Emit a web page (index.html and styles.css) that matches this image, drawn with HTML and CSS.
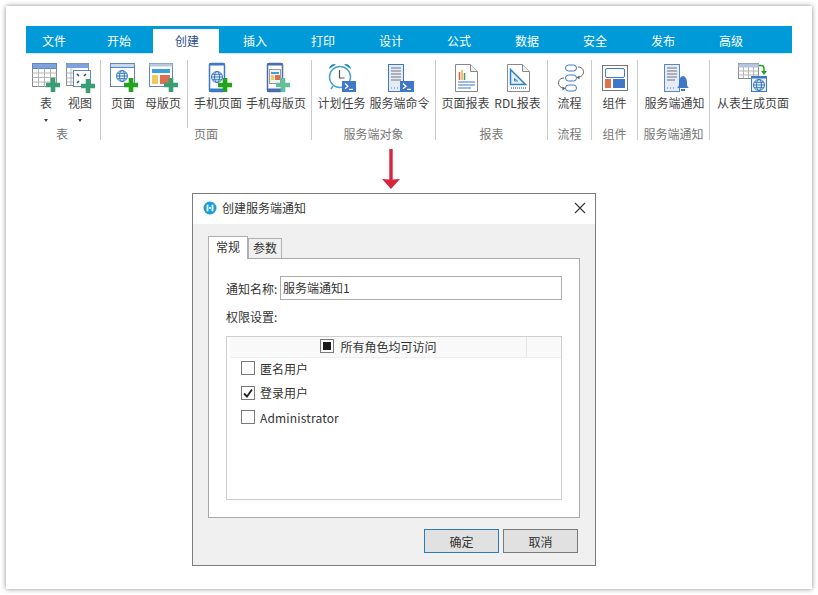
FILE: index.html
```html
<!DOCTYPE html>
<html lang="zh">
<head>
<meta charset="utf-8">
<title>创建服务端通知</title>
<link rel="stylesheet" href="styles.css">
</head>
<body>
<svg class="defs" width="0" height="0">
  <defs>
    <path id="plus" d="M-2.3-7h4.6v4.7H7v4.6H2.3V7h-4.6V2.3H-7v-4.6h4.7z"/>
    <g id="globe" fill="none" stroke="#2f6fb7" stroke-width=".9">
      <circle r="5.500" fill="#dfeefa"/><ellipse rx="2.500" ry="5.500"/><path d="M-5.500 0h11M-4.800-2.700h9.600M-4.800 2.700h9.600"/>
    </g>
    <g id="prompt">
      <rect width="14" height="11" fill="#3f78c9"/>
      <path d="M3 2.600l3 2.600-3 2.600" fill="none" stroke="#fff" stroke-width="1.300"/><path d="M7 8.400h4" stroke="#fff" stroke-width="1.200"/>
    </g>
  </defs>
</svg>
<main class="card">
  <nav class="tabbar">
    <span class="tab t56">文件</span>
    <span class="tab t70">开始</span>
    <span class="tab t66 active">创建</span>
    <span class="tab t68 after">插入</span>
    <span class="tab t68">打印</span>
    <span class="tab t68">设计</span>
    <span class="tab t68">公式</span>
    <span class="tab t68">数据</span>
    <span class="tab t68">安全</span>
    <span class="tab t68">发布</span>
    <span class="tab t68">高级</span>
  </nav>
  <section class="ribbon">
    <div class="group g75">
      <div class="items">
        <div class="item w34">
          <svg class="ico" viewBox="0 0 36 32"><rect x="4.500" y="1.500" width="24" height="23" fill="#fff" stroke="#8a8a8a"/><rect x="4.500" y="1.500" width="24" height="5" fill="#7ea3dc" stroke="#5f86c4"/><path d="M4.500 11h24M4.500 15.500h24M4.500 20h24M10.500 6.500v18M16.500 6.500v18M22.500 6.500v18" stroke="#b5b5b5" fill="none"/><use href="#plus" x="25" y="23" fill="#3a9e74"/></svg>
          <span class="lbl">表</span><i class="caret"></i>
        </div>
        <div class="item w34">
          <svg class="ico" viewBox="0 0 36 32"><rect x="4.500" y="1.500" width="22" height="22" fill="#fff" stroke="#8a8a8a"/><rect x="4.500" y="1.500" width="22" height="4.500" fill="#7ea3dc"/><path d="M4.500 11h7M4.500 16h7M4.500 20h7M9 6v17" stroke="#b5b5b5"/><rect x="11.500" y="8.500" width="17" height="16" fill="#fff" stroke="#5f86c4"/><path d="M15 12l2 2M24 12l-2 2M15 21l2-2" stroke="#34507f" stroke-width="1.600"/><use href="#plus" x="26" y="24" fill="#3a9e74"/></svg>
          <span class="lbl">视图</span><i class="caret"></i>
        </div>
      </div>
      <div class="glabel">表</div>
    </div>
    <div class="group g211">
      <div class="items">
        <div class="sub first">
          <div class="item w40">
            <svg class="ico" viewBox="0 0 36 32"><rect x="5.500" y="1.500" width="24" height="23" fill="#fff" stroke="#5f86c4"/><rect x="5.500" y="1.500" width="24" height="4" fill="#c7d8f0" stroke="#5f86c4"/><use href="#globe" x="17" y="14"/><use href="#plus" x="26" y="23" fill="#21a31c"/></svg>
            <span class="lbl">页面</span>
          </div>
          <div class="item w40">
            <svg class="ico" viewBox="0 0 36 32"><rect x="4.500" y="1.500" width="23" height="23" fill="#fff" stroke="#5f86c4"/><rect x="4.500" y="1.500" width="23" height="3" fill="#b9c8e0"/><rect x="7" y="7" width="18" height="4" fill="#3aa0dc"/><rect x="7" y="13" width="6" height="9" fill="#f4c95b"/><rect x="15" y="13" width="10" height="9" fill="#dc6f4e"/><use href="#plus" x="26" y="23" fill="#3a9e74"/></svg>
            <span class="lbl">母版页</span>
          </div>
        </div>
        <div class="sub second">
          <div class="item w48">
            <svg class="ico" viewBox="0 0 36 32"><rect x="9.500" y="1.500" width="15" height="28" rx="1.500" fill="#fff" stroke="#3f78c9" stroke-width="1.500"/><path d="M9 1.500h16v2H9zM9 26.500h16v3.500H9z" fill="#3f78c9"/><use href="#globe" x="17" y="15"/><use href="#plus" x="25" y="23" fill="#21a31c"/></svg>
            <span class="lbl">手机页面</span>
          </div>
          <div class="item w60">
            <svg class="ico" viewBox="0 0 36 32"><rect x="9.500" y="1.500" width="15" height="28" rx="1.500" fill="#fff" stroke="#4a6cb0" stroke-width="1.500"/><path d="M9 1.500h16v2H9zM9 26.500h16v3.500H9z" fill="#4a6cb0"/><rect x="11.500" y="7.500" width="11" height="14" fill="#f3f3f3" stroke="#9a9a9a"/><rect x="13" y="10" width="8" height="2" fill="#3aa0dc"/><rect x="13" y="13" width="3" height="5" fill="#f4c95b"/><rect x="17" y="13" width="5" height="5" fill="#dc6f4e"/><use href="#plus" x="25" y="23" fill="#63c09c"/></svg>
            <span class="lbl">手机母版页</span>
          </div>
        </div>
      </div>
      <div class="glabel">页面</div>
    </div>
    <div class="group g124">
      <div class="items gap4">
        <div class="item w48">
          <svg class="ico" viewBox="0 0 36 32"><circle cx="16" cy="15" r="10.500" fill="#fff" stroke="#4aa5c9" stroke-width="1.500"/><path d="M5 7a5 5 0 0 1 7-4.500zM27 7a5 5 0 0 0-7-4.500z" fill="#1f8fbd"/><path d="M15.500 8v8h5" fill="none" stroke="#555" stroke-width="1.200"/><path d="M9 24l-2 3M23 24l2 3" stroke="#4aa5c9" stroke-width="1.500"/><use href="#prompt" x="18" y="19"/></svg>
          <span class="lbl">计划任务</span>
        </div>
        <div class="item w60">
          <svg class="ico" viewBox="0 0 36 32"><rect x="6.500" y="2.500" width="15" height="27" fill="#e4ecf7" stroke="#3f78c9"/><path d="M9 6h10M9 9h10M9 12h10M9 15h10M9 18h10" stroke="#777"/><path d="M9 26h1M12 26h1M15 26h1" stroke="#777"/><use href="#prompt" x="18" y="19"/></svg>
          <span class="lbl">服务端命令</span>
        </div>
      </div>
      <div class="glabel">服务端对象</div>
    </div>
    <div class="group g112">
      <div class="items">
        <div class="item w52">
          <svg class="ico" viewBox="0 0 36 32"><path d="M7.500 2.500h15l7 7v20h-22z" fill="#fff" stroke="#888"/><path d="M22.500 2.500v7h7" fill="#eee" stroke="#888"/><path d="M11.500 10v8" stroke="#d85a3a" stroke-width="1.500"/><path d="M14 8v10" stroke="#e3b23c" stroke-width="1.500"/><path d="M16.500 11v7" stroke="#4a9a5a" stroke-width="1.500"/><path d="M10 20h17M10 23h17M10 26h13" stroke="#3f78c9"/></svg>
          <span class="lbl">页面报表</span>
        </div>
        <div class="item w52">
          <svg class="ico" viewBox="0 0 36 32"><path d="M7.500 2.500h15l7 7v20h-22z" fill="#fff" stroke="#888"/><path d="M22.500 2.500v7h7" fill="#eee" stroke="#888"/><path d="M10.500 7.500v15h15z" fill="#e6f0fa" stroke="#2f7fc4" stroke-width="1.500"/><path d="M14.500 16.500v2.500h3z" fill="#fff" stroke="#2f7fc4"/><path d="M11 26h15" stroke="#7aa7d4" stroke-width="2" stroke-dasharray="1 1"/></svg>
          <span class="lbl">RDL报表</span>
        </div>
      </div>
      <div class="glabel">报表</div>
    </div>
    <div class="group g44">
      <div class="items">
        <div class="item w40">
          <svg class="ico" viewBox="0 0 36 32"><g fill="#fff" stroke="#3f78c9"><rect x="13.500" y="3" width="11" height="6" rx="3"/><rect x="13.500" y="13" width="11" height="6" rx="3"/><rect x="13.500" y="23" width="11" height="6" rx="3"/></g><path d="M26 5a5 5 0 0 1 1 10l-2 .500M12 16a5 5 0 0 0-1 10l2 .500" fill="none" stroke="#666"/><path d="M24.500 15.500l3-2v4zM13.500 26.500l-3-2v4z" fill="#666"/></svg>
          <span class="lbl">流程</span>
        </div>
      </div>
      <div class="glabel">流程</div>
    </div>
    <div class="group g46">
      <div class="items">
        <div class="item w40">
          <svg class="ico" viewBox="0 0 36 32"><rect x="5.500" y="3.500" width="25" height="25" fill="#fff" stroke="#777"/><rect x="8.500" y="6.500" width="19" height="9" rx="1.500" fill="#fff" stroke="#3f78c9"/><rect x="8" y="17" width="6" height="9" fill="#e0714a"/><rect x="16" y="17" width="12" height="9" fill="#3f78c9"/></svg>
          <span class="lbl">组件</span>
        </div>
      </div>
      <div class="glabel">组件</div>
    </div>
    <div class="group g72">
      <div class="items shift2">
        <div class="item w60">
          <svg class="ico" viewBox="0 0 36 32"><rect x="7.500" y="2.500" width="15" height="27" fill="#e4ecf7" stroke="#5f86c4"/><path d="M10 6h10M10 9h10M10 12h10M10 15h10M10 18h8" stroke="#777"/><path d="M10 26h1M13 26h1M16 26h1" stroke="#777"/><path d="M20 26c2-1 2-3 2-6 0-3 2-6 4-6s4 3 4 6c0 3 0 5 2 6z" fill="#3f78c9"/><path d="M24 27h4v2h-4z" fill="#3f78c9"/></svg>
          <span class="lbl">服务端通知</span>
        </div>
      </div>
      <div class="glabel">服务端通知</div>
    </div>
    <div class="group g82 last">
      <div class="items shift4">
        <div class="item w72">
          <svg class="ico" viewBox="0 0 36 32"><rect x="3.500" y="1.500" width="20" height="15" fill="#fff" stroke="#8a8a8a"/><rect x="3.500" y="1.500" width="20" height="4" fill="#b7c5e0"/><path d="M3.500 9h20M3.500 13h20M8.500 5v11M13.500 5v11M18.500 5v11" stroke="#b5b5b5"/><path d="M24 3.500h2a3 3 0 0 1 3 3v3" fill="none" stroke="#21a31c" stroke-width="1.500"/><path d="M26 9h6l-3 4z" fill="#21a31c"/><rect x="16.500" y="14.500" width="15" height="15" fill="#e8f0fa" stroke="#3f78c9"/><path d="M16.500 14.500h15v2h-15z" fill="#3f78c9"/><use href="#globe" x="24" y="23"/></svg>
          <span class="lbl">从表生成页面</span>
        </div>
      </div>
    </div>
  </section>
  <div class="arrow-row">
    <svg class="arrow" viewBox="0 0 18 40"><path d="M7.300 0h3.400v30.500L18 30l-9 10-9-10 7.300.500z" fill="#d8243f"/></svg>
  </div>
  <section class="dialog">
    <header class="dlg-title">
      <svg class="dlg-logo" viewBox="0 0 14 14"><circle cx="7" cy="7" r="6.500" fill="#1a9fd8"/><path d="M4.500 3.800v6.400M9.500 3.800v6.400" stroke="#fff" stroke-width="1.800"/><path d="M6 7h2" stroke="#fff" stroke-width="1.300"/></svg>
      <span class="dlg-text">创建服务端通知</span>
      <svg class="dlg-close" viewBox="0 0 12 12"><path d="M1 1l10 10M11 1L1 11" stroke="#333" stroke-width="1.100"/></svg>
    </header>
    <div class="dlg-body">
      <div class="dtabs">
        <span class="dtab on">常规</span>
        <span class="dtab">参数</span>
      </div>
      <div class="panel">
        <div class="field">
          <label class="field-lbl">通知名称:</label>
          <div class="input">服务端通知1</div>
        </div>
        <div class="perm">权限设置:</div>
        <div class="list">
          <div class="list-head">
            <div class="head-main"><span class="cb mixed"></span><span>所有角色均可访问</span></div>
            <div class="head-end"></div>
          </div>
          <div class="row"><span class="cb"></span><span>匿名用户</span></div>
          <div class="row"><span class="cb"><svg viewBox="0 0 12 12" class="tick"><path d="M2 6.500l3 3 5-7" fill="none" stroke="#222" stroke-width="1.800"/></svg></span><span>登录用户</span></div>
          <div class="row"><span class="cb"></span><span class="latin">Administrator</span></div>
        </div>
      </div>
      <div class="btns">
        <button class="btn primary">确定</button>
        <button class="btn">取消</button>
      </div>
    </div>
  </section>
</main>
</body>
</html>
```
FILE: styles.css
```css
* { box-sizing: border-box; }
html, body { margin: 0; padding: 0; background: #fff; }
body {
  width: 818px;
  height: 595px;
  overflow: hidden;
  padding: 6px;
  font-family: "Noto Sans CJK SC", "Liberation Sans", sans-serif;
  font-size: 12px;
  color: #444;
}
.defs { position: absolute; }
.card {
  width: 806px;
  height: 583px;
  padding: 20px;
  background: #fff;
  box-shadow: 0 0 5px rgba(0, 0, 0, .45);
}
.tabbar {
  display: flex;
  width: 766px;
  height: 27px;
  padding-top: 3px;
  background: #009ad9;
  box-shadow: 0 1px 0 #cdeaf6;
}
.tab {
  color: #fff;
  line-height: 24px;
  text-align: center;
}
.t56 { width: 56px; }
.t70 { width: 70px; margin-right: 1px; padding-left: 4px; }
.t66 { width: 66px; }
.t68 { width: 68px; }
.after { margin-left: 2px; }
.tab.active { background: #fff; color: #2b4a8a; position: relative; z-index: 1; box-shadow: 0 1px 0 #fff; padding-left: 2px; }

.ribbon { display: flex; margin-top: 7px; height: 80px; }
.group { position: relative; border-right: 1px solid #ccc; display: flex; flex-direction: column; color: #444; }
.group.last { border-right: 0; }
.g75 { width: 75px; }
.g211 { width: 211px; }
.g124 { width: 124px; }
.g112 { width: 112px; }
.g44 { width: 44px; }
.g46 { width: 46px; }
.g72 { width: 72px; }
.g82 { width: 82px; }
.items { display: flex; justify-content: center; height: 66px; }
.gap4 { gap: 4px; }
.shift2 { padding-left: 2px; }
.shift4 { padding-left: 4px; }
.sub { display: flex; height: 68px; }
.sub.first { width: 87px; padding-left: 2px; border-right: 1px solid #ccc; }
.sub.second { flex: 1; padding-left: 6px; gap: 4px; }
.item { display: flex; flex-direction: column; align-items: center; position: relative; padding-top: 2px; }
.w34 { width: 34px; }
.w40 { width: 40px; }
.w48 { width: 48px; }
.w52 { width: 52px; }
.w60 { width: 60px; }
.w72 { width: 72px; }
.ico { width: 36px; height: 32px; flex: none; display: block; }
.lbl { line-height: 18px; margin-top: 0; white-space: nowrap; }
.caret {
  margin-top: 7px;
  width: 0;
  height: 0;
  border-left: 2.500px solid transparent;
  border-right: 2.500px solid transparent;
  border-top: 3px solid #444;
}
.glabel {
  position: absolute;
  left: 0;
  right: 0;
  top: 67px;
  line-height: 14px;
  text-align: center;
  color: #777;
}
.g75 .glabel { right: 2px; }
.arrow-row { display: flex; justify-content: flex-start; height: 40px; margin-top: 9px; padding-left: 356px; }
.arrow { width: 18px; height: 40px; display: block; }

.dialog {
  width: 404px;
  height: 373px;
  margin-left: 166px;
  margin-top: 4px;
  border: 1px solid #7c7c7c;
  background: #f0f0f0;
  display: flex;
  flex-direction: column;
}
.dlg-title {
  height: 30px;
  background: #fff;
  display: flex;
  align-items: center;
  padding: 0 9px 2px 10px;
  color: #333;
}
.dlg-logo { width: 14px; height: 14px; }
.dlg-text { margin-left: 5px; flex: 1; padding-bottom: 2px; }
.dlg-close { width: 12px; height: 12px; }
.dlg-body { flex: 1; padding: 12px 15px 0; }
.dtabs { display: flex; height: 22px; align-items: flex-end; position: relative; }
.dtab {
  width: 34px;
  height: 20px;
  line-height: 17px;
  text-align: center;
  border: 1px solid #b0b0b0;
  border-bottom: 0;
  color: #333;
}
.dtab.on {
  width: 40px;
  height: 23px;
  line-height: 20px;
  background: #fff;
  margin-bottom: -1px;
  position: relative;
  z-index: 1;
}
.panel {
  width: 372px;
  height: 260px;
  border: 1px solid #a9a9a9;
  background: #fff;
  padding: 17px 17px 0;
  color: #333;
}
.field { display: flex; align-items: center; height: 24px; }
.field-lbl { width: 54px; }
.input {
  width: 282px;
  height: 24px;
  line-height: 22px;
  border: 1px solid #acacac;
  padding-left: 2px;
}
.perm { margin-top: 8px; line-height: 17px; }
.list {
  margin-top: 11px;
  width: 336px;
  height: 164px;
  border: 1px solid #cfcfcf;
  padding: 0 0 0 3px;
}
.list-head {
  display: flex;
  height: 21px;
  background: #f9f9f9;
  border-bottom: 1px solid #efefef;
}
.head-main {
  width: 297px;
  display: flex;
  justify-content: center;
  align-items: center;
  gap: 6px;
  padding: 0 0 2px 1px;
  border-right: 1px solid #e6e6e6;
}
.head-end { flex: 1; }
.row { display: flex; align-items: center; gap: 5px; height: 24.500px; padding-left: 11px; }
.list-head + .row { margin-top: -2px; }
.latin { letter-spacing: .16px; }
.cb {
  width: 14px;
  height: 14px;
  flex: none;
  border: 1px solid #7a7a7a;
  background: #fff;
  display: flex;
  align-items: center;
  justify-content: center;
}
.cb.mixed { box-shadow: inset 0 0 0 2px #fff, inset 0 0 0 7px #1c1c1c; }
.tick { width: 12px; height: 12px; }
.btns { display: flex; justify-content: flex-end; gap: 4px; margin-top: 11px; padding-right: 2px; }
.btn {
  width: 75px;
  height: 24px;
  padding: 0;
  background: #e1e1e1;
  border: 1px solid #7a7a7a;
  font: inherit;
  color: #333;
}
.btn.primary { border-color: #2b7bb9; }
```
